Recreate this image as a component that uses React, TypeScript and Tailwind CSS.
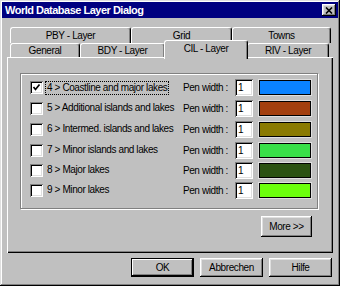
import type { ReactNode } from "react";

const font = "font-['Liberation_Sans',Arial,sans-serif]";
const raised =
  "shadow-[inset_-1px_-1px_#000,inset_1px_1px_#fff,inset_-2px_-2px_#808080,inset_2px_2px_#dfdfdf]";
const sunken =
  "shadow-[inset_1px_1px_#808080,inset_-1px_-1px_#fff,inset_2px_2px_#000,inset_-2px_-2px_#dfdfdf]";

const layers = [
  { id: "4", label: "Coastline and major lakes", color: "#0a82ff", checked: true, row: "h-[21px]" },
  { id: "5", label: "Additional islands and lakes", color: "#a33f0e", checked: false, row: "h-[20px]" },
  { id: "6", label: "Intermed. islands and lakes", color: "#8a7a00", checked: false, row: "h-[22px]" },
  { id: "7", label: "Minor islands and lakes", color: "#38e048", checked: false, row: "h-[20px]" },
  { id: "8", label: "Major lakes", color: "#2b5212", checked: false, row: "h-[20px]" },
  { id: "9", label: "Minor lakes", color: "#6cff0c", checked: false, row: "h-[20px]" },
];

function Tab({ width, children, selected = false }: { width: string; children: ReactNode; selected?: boolean }) {
  return (
    <div
      className={`${width} flex shrink-0 items-center justify-center rounded-t-[3px] border-l border-t border-r border-l-white border-t-white border-r-black bg-[#c0c0c0] shadow-[inset_-1px_0_#808080] ${
        selected ? "relative z-10 -mx-[1px] -mt-[3px] -mb-[2px] pb-[3px]" : ""
      }`}
    >
      {children}
    </div>
  );
}

function Button({ width, children, isDefault = false }: { width: string; children: ReactNode; isDefault?: boolean }) {
  return (
    <button
      type="button"
      className={`${width} flex h-[19px] items-center justify-center bg-[#c0c0c0] text-black ${
        isDefault ? "border border-black shadow-[inset_-1px_-1px_#000,inset_1px_1px_#fff,inset_-2px_-2px_#808080]" : raised
      }`}
    >
      {children}
    </button>
  );
}

function Checkbox({ checked }: { checked: boolean }) {
  return (
    <div className={`flex size-[13px] shrink-0 items-center justify-center bg-white ${sunken}`}>
      {checked && (
        <svg width="9" height="9" viewBox="0 0 9 9">
          <polyline points="1.5,4 3.5,6.5 7.5,1.5" fill="none" stroke="#000" strokeWidth="1.7" />
        </svg>
      )}
    </div>
  );
}

export default function App() {
  return (
    <div
      className={`${font} flex h-[286px] w-[340px] flex-col bg-[#c0c0c0] p-[2px] text-[10px] tracking-[-0.4px] text-black shadow-[inset_-1px_-1px_#000,inset_1px_1px_#dfdfdf,inset_-2px_-2px_#808080,inset_2px_2px_#fff]`}
    >
      <div className="flex h-[16px] shrink-0 items-center justify-between bg-[#000080] pl-[3px] pr-[2px]">
        <span className="text-[11px] font-bold tracking-[-0.5px] text-white">World Database Layer Dialog</span>
        <div className={`flex h-[12px] w-[14px] items-center justify-center bg-[#c0c0c0] ${raised}`}>
          <svg width="8" height="7" viewBox="0 0 8 7">
            <path d="M1 0.5 L7 6.5 M7 0.5 L1 6.5" stroke="#000" strokeWidth="1.6" />
          </svg>
        </div>
      </div>

      <div className="ml-[5px] mt-[9px] flex w-[326px] flex-col">
        <div className="ml-[3px] flex h-[16px]">
          <Tab width="w-[121px]">PBY - Layer</Tab>
          <Tab width="w-[101px]">Grid</Tab>
          <Tab width="w-[99px]">Towns</Tab>
        </div>
        <div className="ml-[3px] flex h-[14px]">
          <Tab width="w-[70px]">General</Tab>
          <Tab width="w-[85px]">BDY - Layer</Tab>
          <Tab width="w-[84px]" selected>
            CIL - Layer
          </Tab>
          <Tab width="w-[82px]">RIV - Layer</Tab>
        </div>

        <div className="flex h-[196px] flex-col shadow-[inset_1px_1px_#fff,inset_-1px_-1px_#000,inset_-2px_-2px_#808080]">
          <div className="ml-[13px] mt-[16px] flex h-[136px] w-[298px] flex-col border border-[#808080] pt-[3px] shadow-[1px_1px_0_#fff,inset_1px_1px_0_#fff]">
            {layers.map((layer) => (
              <div key={layer.id} className={`${layer.row} flex items-center pl-[9px] pr-[6px]`}>
                <Checkbox checked={layer.checked} />
                <span
                  className={`ml-[2px] whitespace-nowrap px-[1px] leading-[12px] ${
                    layer.checked ? "border border-dotted border-black" : "border border-transparent"
                  }`}
                >
                  {layer.id} &gt; {layer.label}
                </span>
                <span className="ml-auto shrink-0 whitespace-nowrap">Pen width :</span>
                <div className={`ml-[7px] flex h-[17px] w-[18px] shrink-0 items-center bg-white pl-[3px] ${sunken}`}>
                  1
                </div>
                <div
                  className="ml-[6px] h-[15px] w-[52px] shrink-0 border border-black shadow-[0_0_0_1px_#dfdfdf]"
                  style={{ backgroundColor: layer.color }}
                />
              </div>
            ))}
          </div>
          <div className="ml-[13px] mt-[7px] flex w-[298px] justify-end pr-[6px]">
            <button
              type="button"
              className={`flex h-[21px] w-[51px] items-center justify-center bg-[#c0c0c0] ${raised}`}
            >
              More &gt;&gt;
            </button>
          </div>
        </div>
      </div>

      <div className="mt-[5px] flex justify-end gap-[6px] pr-[6px]">
        <Button width="w-[63px]" isDefault>
          OK
        </Button>
        <Button width="w-[63px]">Abbrechen</Button>
        <Button width="w-[63px]">Hilfe</Button>
      </div>
    </div>
  );
}
